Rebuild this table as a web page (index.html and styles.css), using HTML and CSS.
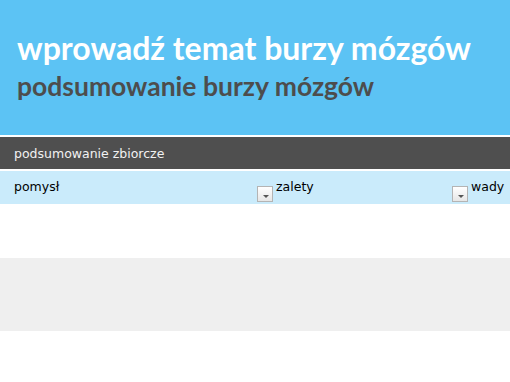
FILE: index.html
```html
<!DOCTYPE html>
<html lang="pl">
<head>
<meta charset="utf-8">
<link rel="stylesheet" href="styles.css">
</head>
<body>
<header class="banner">
  <h1 class="title">wprowadź temat burzy mózgów</h1>
  <h2 class="subtitle">podsumowanie burzy mózgów</h2>
</header>
<div class="section">podsumowanie zbiorcze</div>
<div class="table">
  <div class="head">
    <div class="cell c1"><span>pomysł</span><span class="filter"></span></div>
    <div class="cell c2"><span>zalety</span><span class="filter"></span></div>
    <div class="cell c3"><span>wady</span></div>
  </div>
  <div class="row"></div>
  <div class="row alt"></div>
</div>
</body>
</html>
```
FILE: styles.css
```css
html, body {
  margin: 0;
  padding: 0;
  background: #ffffff;
  overflow: hidden;
}
body {
  width: 510px;
  height: 382px;
}
.banner {
  height: 135px;
  background: #5cc3f4;
  box-sizing: border-box;
  padding: 30px 0 0 17px;
  font-family: "Lato", "DejaVu Sans", sans-serif;
  font-weight: 700;
}
.title {
  margin: 0;
  font-size: 32px;
  line-height: 36px;
  color: #ffffff;
  font-weight: 700;
}
.subtitle {
  margin: 2px 0 0;
  font-size: 26.5px;
  line-height: 36px;
  color: #4d4d4d;
  font-weight: 700;
}
.section {
  margin-top: 2px;
  height: 32px;
  background: #4f4f4f;
  color: #f2f2f2;
  font-family: "DejaVu Sans", sans-serif;
  font-size: 12.5px;
  display: flex;
  align-items: center;
  padding-left: 14px;
}
.table {
  margin-top: 2px;
  font-family: "DejaVu Sans", sans-serif;
  font-size: 12.5px;
  color: #000000;
}
.head {
  height: 33px;
  background: #caebfb;
  display: flex;
}
.cell {
  display: flex;
  align-items: flex-end;
  justify-content: space-between;
  padding-bottom: 9px;
  box-sizing: border-box;
}
.cell span:first-child {
  line-height: 14px;
  margin-bottom: 1px;
}
.c1 { width: 274px; padding-left: 14px; padding-right: 1px; }
.c2 { width: 195px; padding-left: 2px; padding-right: 1px; }
.c3 { flex: 1; padding-left: 2px; }
.filter {
  width: 16px;
  height: 16px;
  box-sizing: border-box;
  border: 1px solid #b4b4b4;
  background: linear-gradient(#ffffff, #e6e6e6);
  position: relative;
  margin-bottom: -7px;
}
.filter::after {
  content: "";
  position: absolute;
  left: 5px;
  top: 8px;
  border-left: 3px solid transparent;
  border-right: 3px solid transparent;
  border-top: 3px solid #555555;
}
.row {
  height: 54px;
}
.row.alt {
  height: 73px;
  background: #efefef;
}
```
